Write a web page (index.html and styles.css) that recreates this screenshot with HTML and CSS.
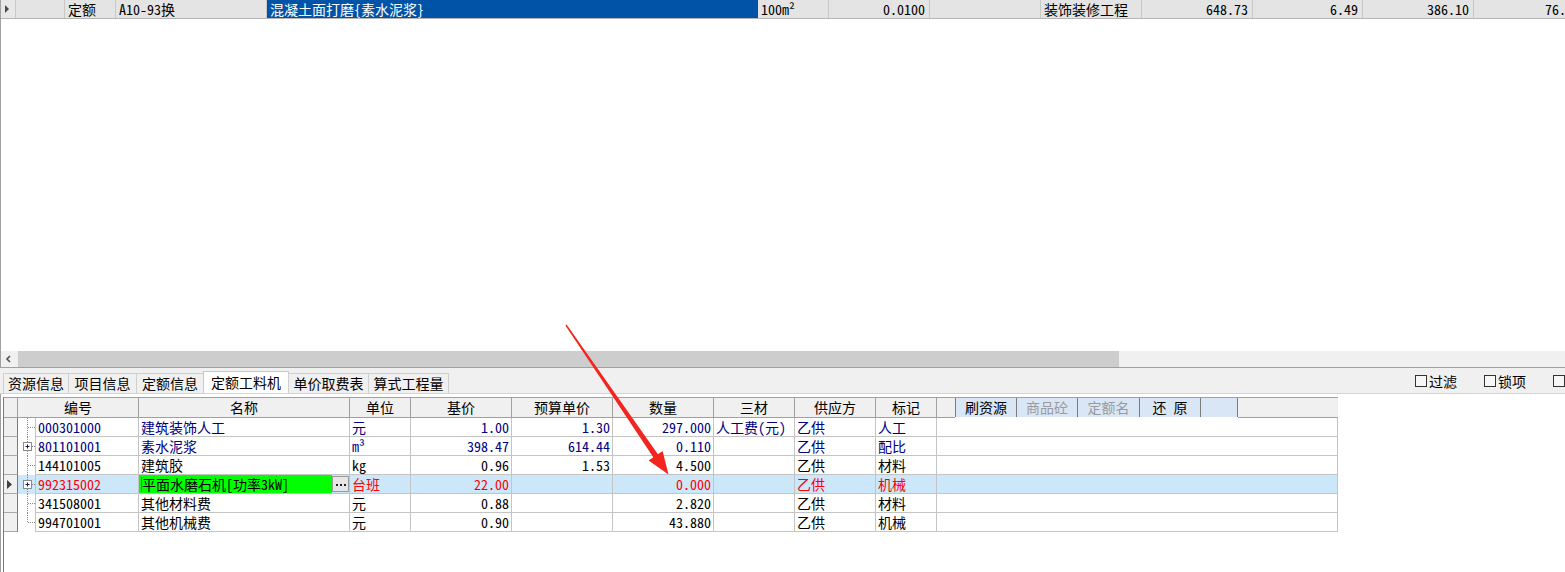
FILE: index.html
```html
<!DOCTYPE html>
<html lang="zh-CN">
<head>
<meta charset="utf-8">
<title>定额工料机</title>
<link rel="stylesheet" href="styles.css">
</head>
<body>
<div class="app">
  <div class="upper">
    <div class="toprow">
      <div class="tc rhead"><svg width="12" height="18" viewBox="0 0 12 18"><polygon points="4,5 8,9 4,13" fill="#4a4a4a"/></svg></div>
      <div class="tc"></div>
      <div class="tc">定额</div>
      <div class="tc">A10-93换</div>
      <div class="tc sel">混凝土面打磨{素水泥浆}</div>
      <div class="tc">100m²</div>
      <div class="tc num">0.0100</div>
      <div class="tc"></div>
      <div class="tc">装饰装修工程</div>
      <div class="tc num">648.73</div>
      <div class="tc num">6.49</div>
      <div class="tc num">386.10</div>
      <div class="tc num">76.24</div>
    </div>
    <div class="blank"></div>
    <div class="hscroll">
      <div class="sarrow"><svg width="16" height="16" viewBox="0 0 16 16"><polyline points="9,5 6,8 9,11" fill="none" stroke="#505050" stroke-width="1.6"/></svg></div>
      <div class="thumb"></div>
    </div>
  </div>

  <div class="tabbar">
    <div class="tabs">
      <div class="tab">资源信息</div>
      <div class="tab">项目信息</div>
      <div class="tab">定额信息</div>
      <div class="tab active">定额工料机</div>
      <div class="tab">单价取费表</div>
      <div class="tab">算式工程量</div>
    </div>
    <div class="checks">
      <label class="chk"><span class="box"></span><span>过滤</span></label>
      <label class="chk"><span class="box"></span><span>锁项</span></label>
      <label class="chk"><span class="box"></span></label>
    </div>
  </div>

  <div class="lower">
    <div class="grid">
      <div class="hrow">
        <div class="h rh"></div>
        <div class="h">编号</div>
        <div class="h">名称</div>
        <div class="h">单位</div>
        <div class="h">基价</div>
        <div class="h">预算单价</div>
        <div class="h">数量</div>
        <div class="h">三材</div>
        <div class="h">供应方</div>
        <div class="h">标记</div>
        <div class="h hlast">
          <div class="hpad"></div>
          <div class="toolbar">
            <span class="tb">刷资源</span>
            <span class="tb dim">商品砼</span>
            <span class="tb dim w62">定额名</span>
            <span class="tb">还 原</span>
            <span class="tb blankb"></span>
          </div>
          <div class="hrest"></div>
        </div>
      </div>

      <div class="row navy">
        <div class="c rh"></div>
        <div class="c tree"><svg width="18" height="19" viewBox="0 0 18 19"><line x1="9.5" y1="0" x2="9.5" y2="19" class="dot"/><line x1="10" y1="9.5" x2="18" y2="9.5" class="dot"/></svg></div>
        <div class="c">000301000</div>
        <div class="c">建筑装饰人工</div>
        <div class="c">元</div>
        <div class="c num">1.00</div>
        <div class="c num">1.30</div>
        <div class="c num">297.000</div>
        <div class="c">人工费(元)</div>
        <div class="c">乙供</div>
        <div class="c">人工</div>
        <div class="c"></div>
      </div>

      <div class="row navy">
        <div class="c rh"></div>
        <div class="c tree"><svg width="18" height="19" viewBox="0 0 18 19"><line x1="9.5" y1="0" x2="9.5" y2="5" class="dot"/><line x1="9.5" y1="14" x2="9.5" y2="19" class="dot"/><rect x="5.5" y="5.5" width="8" height="8" fill="#fff" stroke="#8c8c8c"/><line x1="7.5" y1="9.5" x2="11.5" y2="9.5" stroke="#1a1a5a"/><line x1="9.5" y1="7.5" x2="9.5" y2="11.5" stroke="#1a1a5a"/><line x1="14" y1="9.5" x2="18" y2="9.5" class="dot"/></svg></div>
        <div class="c">801101001</div>
        <div class="c">素水泥浆</div>
        <div class="c">m³</div>
        <div class="c num">398.47</div>
        <div class="c num">614.44</div>
        <div class="c num">0.110</div>
        <div class="c"></div>
        <div class="c">乙供</div>
        <div class="c">配比</div>
        <div class="c"></div>
      </div>

      <div class="row">
        <div class="c rh"></div>
        <div class="c tree"><svg width="18" height="19" viewBox="0 0 18 19"><line x1="9.5" y1="0" x2="9.5" y2="19" class="dot"/><line x1="10" y1="9.5" x2="18" y2="9.5" class="dot"/></svg></div>
        <div class="c">144101005</div>
        <div class="c">建筑胶</div>
        <div class="c">kg</div>
        <div class="c num">0.96</div>
        <div class="c num">1.53</div>
        <div class="c num">4.500</div>
        <div class="c"></div>
        <div class="c">乙供</div>
        <div class="c">材料</div>
        <div class="c"></div>
      </div>

      <div class="row red current">
        <div class="c rh"><svg width="13" height="18" viewBox="0 0 13 18"><polygon points="3,5 8,9.5 3,14" fill="#404040"/></svg></div>
        <div class="c tree"><svg width="18" height="19" viewBox="0 0 18 19"><line x1="9.5" y1="0" x2="9.5" y2="5" class="dot"/><line x1="9.5" y1="14" x2="9.5" y2="19" class="dot"/><rect x="5.5" y="5.5" width="8" height="8" fill="#fff" stroke="#8c8c8c"/><line x1="7.5" y1="9.5" x2="11.5" y2="9.5" stroke="#1a1a5a"/><line x1="9.5" y1="7.5" x2="9.5" y2="11.5" stroke="#1a1a5a"/><line x1="14" y1="9.5" x2="18" y2="9.5" class="dot"/></svg></div>
        <div class="c">992315002</div>
        <div class="c edit"><div class="editor"><span class="caret"></span>平面水磨石机[功率3kW]</div><div class="ellipsis"><svg width="15" height="15" viewBox="0 0 15 15"><rect x="3" y="7" width="2" height="2" fill="#222"/><rect x="7" y="7" width="2" height="2" fill="#222"/><rect x="11" y="7" width="2" height="2" fill="#222"/></svg></div></div>
        <div class="c">台班</div>
        <div class="c num">22.00</div>
        <div class="c num"></div>
        <div class="c num">0.000</div>
        <div class="c"></div>
        <div class="c">乙供</div>
        <div class="c">机械</div>
        <div class="c"></div>
      </div>

      <div class="row">
        <div class="c rh"></div>
        <div class="c tree"><svg width="18" height="19" viewBox="0 0 18 19"><line x1="9.5" y1="0" x2="9.5" y2="19" class="dot"/><line x1="10" y1="9.5" x2="18" y2="9.5" class="dot"/></svg></div>
        <div class="c">341508001</div>
        <div class="c">其他材料费</div>
        <div class="c">元</div>
        <div class="c num">0.88</div>
        <div class="c num"></div>
        <div class="c num">2.820</div>
        <div class="c"></div>
        <div class="c">乙供</div>
        <div class="c">材料</div>
        <div class="c"></div>
      </div>

      <div class="row">
        <div class="c rh"></div>
        <div class="c tree"><svg width="18" height="19" viewBox="0 0 18 19"><line x1="9.5" y1="0" x2="9.5" y2="10" class="dot"/><line x1="10" y1="9.5" x2="18" y2="9.5" class="dot"/></svg></div>
        <div class="c">994701001</div>
        <div class="c">其他机械费</div>
        <div class="c">元</div>
        <div class="c num">0.90</div>
        <div class="c num"></div>
        <div class="c num">43.880</div>
        <div class="c"></div>
        <div class="c">乙供</div>
        <div class="c">机械</div>
        <div class="c"></div>
      </div>
    </div>
  </div>

  <svg class="annot" width="1565" height="572" viewBox="0 0 1565 572">
    <polygon points="565.4,325.4 566.6,324.6 657.9,454.2 662.6,450.9 668.5,474.5 648.6,460.6 653.3,457.3" fill="#f2261f"/>
  </svg>
</div>
</body>
</html>
```
FILE: styles.css
```css
* { box-sizing: border-box; }

body {
  margin: 0;
  width: 1565px;
  height: 572px;
  overflow: hidden;
  background: #fff;
  color: #000;
  font-family: "Noto Sans Mono CJK SC", "Noto Sans CJK SC", "Liberation Mono", monospace;
  font-size: 14px;
}

.app {
  position: relative;
  height: 572px;
  display: flex;
  flex-direction: column;
}

/* ---------- upper grid ---------- */
.upper {
  height: 368px;
  flex-shrink: 0;
  border-left: 1px solid #a0a0a0;
  border-bottom: 1px solid #a0a0a0;
  display: flex;
  flex-direction: column;
  overflow: hidden;
}

.toprow {
  display: grid;
  grid-template-columns: 15px 49px 51px 151px 491px 71px 101px 111px 101px 111px 110px 111px 111px;
  height: 19px;
  border-bottom: 1px solid #b4b4b4;
  background: #e4e4e4;
  white-space: nowrap;
  overflow: hidden;
  line-height: 18px;
}

.tc {
  border-right: 1px solid #c8c8c8;
  padding: 0 3px;
  overflow: hidden;
}

.tc.rhead { padding: 0; background: #e8e8e8; }
.tc.rhead svg { display: block; }
.tc.num { text-align: right; padding-right: 4px; }
.tc.sel { background: #0053a6; color: #fff; border-right-color: #0053a6; }

.blank { flex: 1; }

.hscroll {
  height: 16px;
  background: #f0f0f0;
  display: flex;
}
.sarrow { width: 17px; height: 16px; }
.sarrow svg { display: block; }
.thumb { width: 1101px; height: 16px; background: #cdcdcd; }

/* ---------- tab bar ---------- */
.tabbar {
  height: 26px;
  flex-shrink: 0;
  background: #f0f0f0;
  border-bottom: 1px solid #d4d4d4;
  display: flex;
  align-items: flex-end;
  white-space: nowrap;
  overflow: hidden;
}

.tabs {
  display: flex;
  align-items: flex-end;
  padding-left: 4px;
  flex-shrink: 0;
}

.tab {
  height: 20px;
  line-height: 19px;
  padding: 0 4px;
  margin-left: -1px;
  border: 1px solid #cfcfcf;
  border-bottom: none;
  background: #f0f0f0;
  text-align: center;
}
.tab:nth-child(1) { width: 66px; }
.tab:nth-child(2) { width: 69px; }
.tab:nth-child(3) { width: 68px; }
.tab:nth-child(5) { width: 81px; }
.tab:nth-child(6) { width: 81px; }

.tab.active {
  width: 86px;
  height: 23px;
  line-height: 21px;
  margin-bottom: -1px;
  background: #fff;
  border-color: #c8c8c8;
}

.checks {
  display: flex;
  gap: 27px;
  margin-left: 966px;
  align-self: center;
  flex-shrink: 0;
}

.chk {
  display: flex;
  align-items: center;
  gap: 2px;
  line-height: 16px;
}

.box {
  width: 12px;
  height: 12px;
  border: 1px solid #333;
  background: #f7f7f7;
}

/* ---------- lower grid ---------- */
.lower {
  flex: 1;
  border-left: 1px solid #a0a0a0;
  padding: 3px 0 0 2px;
  display: flex;
}

.grid {
  width: 1335px;
  border-left: 1px solid #7a7a7a;
  display: flex;
  flex-direction: column;
}

.hrow {
  display: grid;
  grid-template-columns: 14px 121px 211px 61px 101px 101px 101px 81px 81px 61px 401px;
  height: 21px;
  border-top: 1px solid #a0a0a0;
}

.h {
  background: #f0f0f0;
  border-right: 1px solid #a0a0a0;
  border-bottom: 1px solid #a0a0a0;
  text-align: center;
  line-height: 19px;
  white-space: nowrap;
}

.h.hlast {
  background: transparent;
  border: none;
  display: flex;
}

.hpad {
  width: 18px;
  background: #f0f0f0;
  border-bottom: 1px solid #a0a0a0;
}

.toolbar {
  display: flex;
  height: 19px;
  border-left: 1px solid #7c7c7c;
  background: #d9e6f5;
}

.tb {
  width: 61px;
  height: 19px;
  border-right: 1px solid #7c7c7c;
  line-height: 18px;
  text-align: center;
}
.tb.w62 { width: 62px; }
.tb.dim { color: #9a9a9a; }
.tb.blankb { width: 37px; }

.hrest {
  width: 100px;
  background: #f0f0f0;
  border-bottom: 1px solid #a0a0a0;
}

.row {
  display: grid;
  grid-template-columns: 14px 18px 103px 211px 61px 101px 101px 101px 81px 81px 61px 401px;
  height: 19px;
}

.c {
  border-right: 1px solid #c4c4c4;
  border-bottom: 1px solid #c4c4c4;
  padding: 0 2px;
  line-height: 18px;
  white-space: nowrap;
  overflow: hidden;
}

.c.num { text-align: right; }

.c.rh {
  background: #f0f0f0;
  border-right: 1px solid #7a7a7a;
  border-bottom: 1px solid #a8a8a8;
  padding: 0;
}
.c.rh svg { display: block; }

.c.tree {
  border-bottom: none;
  padding: 0;
}
.c.tree svg { display: block; }

.dot {
  stroke: #8a8a8a;
  stroke-width: 1;
  stroke-dasharray: 1 1;
}

.row.navy { color: #000080; }
.row.red { color: #ff0000; }
.row.current .c:not(.rh) { background: #cce6fa; }

.c.edit {
  padding: 0;
  display: flex;
}

.editor {
  flex: 1;
  background: #00ff00;
  color: #000;
  padding-left: 2px;
  display: flex;
  align-items: center;
  line-height: 18px;
  overflow: hidden;
}

.caret {
  width: 1px;
  height: 15px;
  background: #e000e0;
  flex-shrink: 0;
}

.ellipsis {
  width: 17px;
  height: 16px;
  margin-top: 1px;
  flex-shrink: 0;
  background: #e6e6e6;
  border: 1px solid #9a9a9a;
}
.ellipsis svg { display: block; }

.annot {
  position: absolute;
  left: 0;
  top: 0;
  pointer-events: none;
}
```
